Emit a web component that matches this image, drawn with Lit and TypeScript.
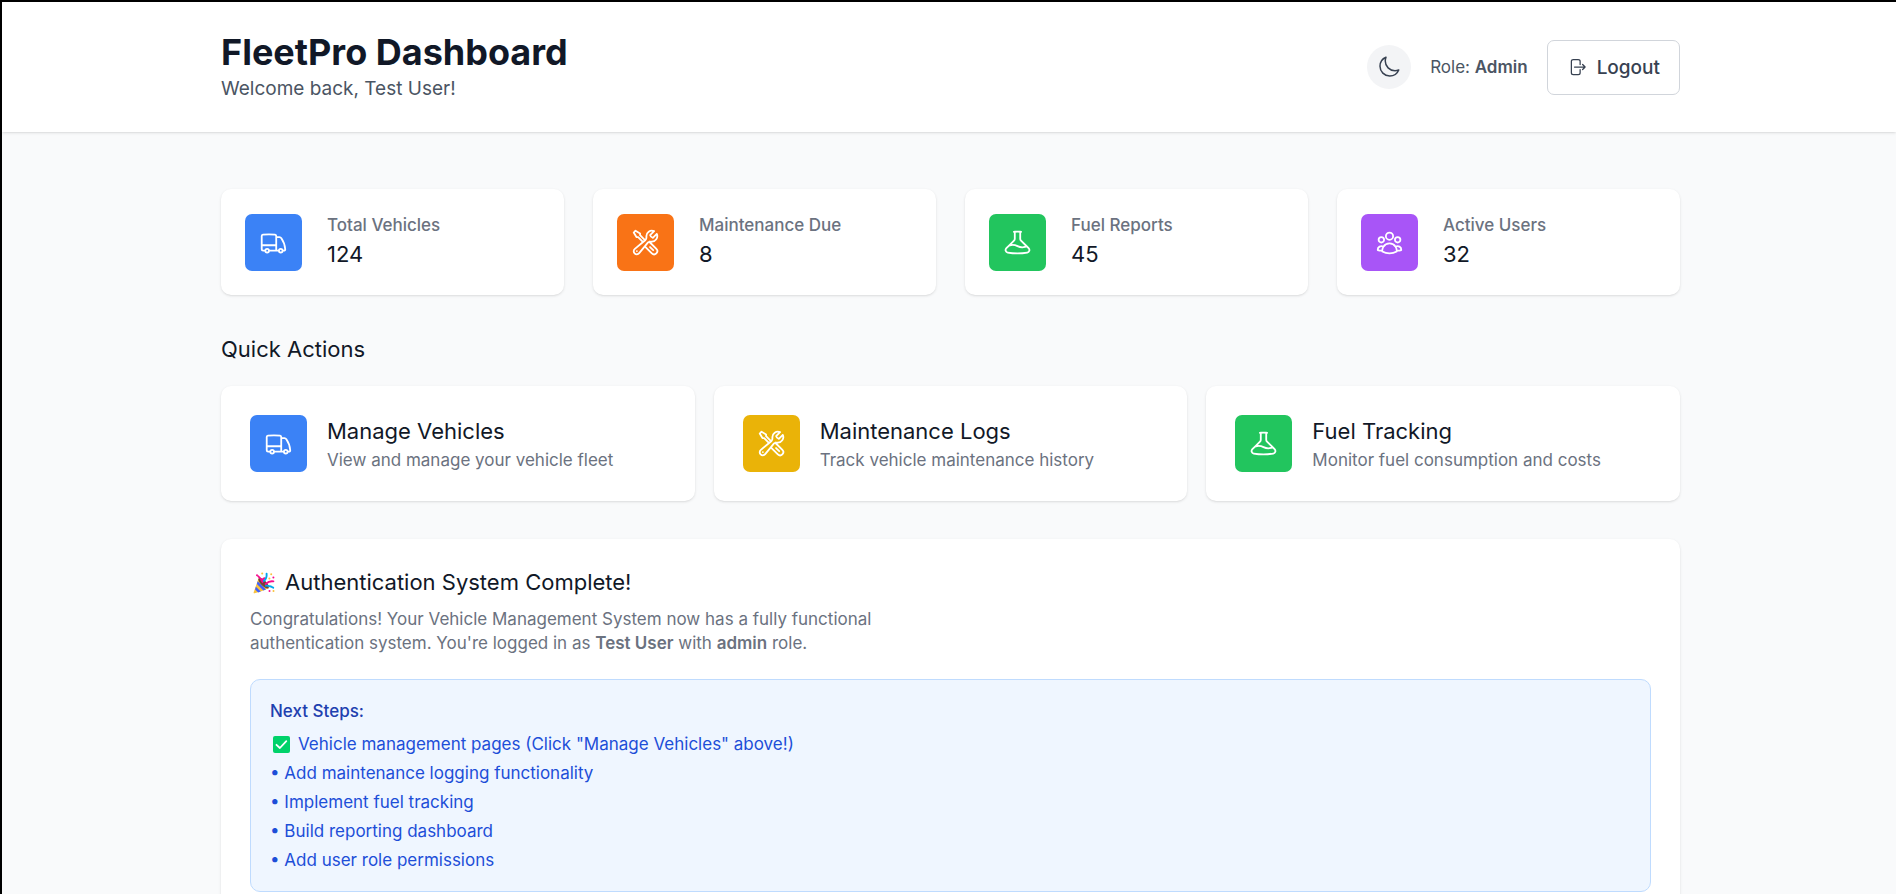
import { LitElement, html, css, svg } from "lit";
import { customElement, state } from "lit/decorators.js";

const ICONS: Record<string, string> = {
  moon: "M21.752 15.002A9.718 9.718 0 0118 15.75c-5.385 0-9.75-4.365-9.75-9.75 0-1.33.266-2.597.748-3.752A9.753 9.753 0 003 11.25C3 16.635 7.365 21 12.75 21a9.753 9.753 0 009.002-5.998z",
  logout:
    "M15.75 9V5.25A2.25 2.25 0 0013.5 3h-6a2.25 2.25 0 00-2.25 2.25v13.5A2.25 2.25 0 007.5 21h6a2.25 2.25 0 002.25-2.25V15m3 0l3-3m0 0l-3-3m3 3H9",
  truck:
    "M8.25 18.75a1.5 1.5 0 01-3 0m3 0a1.5 1.5 0 00-3 0m3 0h6m-9 0H3.375a1.125 1.125 0 01-1.125-1.125V14.25m17.25 4.5a1.5 1.5 0 01-3 0m3 0a1.5 1.5 0 00-3 0m3 0h1.125c.621 0 1.129-.504 1.09-1.124a17.902 17.902 0 00-3.213-9.193 2.056 2.056 0 00-1.58-.86H14.25M16.5 18.75h-2.25m0-11.177v-.958c0-.568-.422-1.048-.987-1.106a48.554 48.554 0 00-10.026 0 1.106 1.106 0 00-.987 1.106v7.635m12-6.677v6.677m0 4.5v-4.5m0 0h-12",
  tools:
    "M11.42 15.17L17.25 21A2.652 2.652 0 0021 17.25l-5.877-5.877M11.42 15.17l2.496-3.03c.317-.384.74-.626 1.208-.766M11.42 15.17l-4.655 5.653a2.548 2.548 0 11-3.586-3.586l6.837-5.63m5.108-.233c.55-.164 1.163-.188 1.743-.14a4.5 4.5 0 004.486-6.336l-3.276 3.277a3.004 3.004 0 01-2.25-2.25l3.276-3.276a4.5 4.5 0 00-6.336 4.486c.091 1.076-.071 2.264-.904 2.95l-.102.085m-1.745 1.437L5.909 7.5H4.5L2.25 3.75l1.5-1.5L7.5 4.5v1.409l4.26 4.26m-1.745 1.437l1.745-1.437m6.615 8.206L15.75 15.75M4.867 19.125h.008v.008h-.008v-.008z",
  beaker:
    "M9.75 3.104v5.714a2.25 2.25 0 01-.659 1.591L5 14.5M9.75 3.104c-.251.023-.501.05-.75.082m.75-.082a24.301 24.301 0 014.5 0m0 0v5.714c0 .597.237 1.17.659 1.591L19.8 15.3M14.25 3.104c.251.023.501.05.75.082M19.8 15.3l-1.57.393A9.065 9.065 0 0112 15a9.065 9.065 0 00-6.23-.693L5 14.5m14.8.8l1.402 1.402c1.232 1.232.65 3.318-1.067 3.611A48.309 48.309 0 0112 21c-2.773 0-5.491-.235-8.135-.687-1.718-.293-2.3-2.379-1.067-3.61L5 14.5",
  users:
    "M18 18.72a9.094 9.094 0 003.741-.479 3 3 0 00-4.682-2.72m.94 3.198l.001.031c0 .225-.012.447-.037.666A11.944 11.944 0 0112 21c-2.17 0-4.207-.576-5.963-1.584A6.062 6.062 0 016 18.719m12 0a5.971 5.971 0 00-.941-3.197m0 0A5.995 5.995 0 0012 12.75a5.995 5.995 0 00-5.058 2.772m0 0a3 3 0 00-4.681 2.72 8.986 8.986 0 003.74.477m.94-3.197a5.971 5.971 0 00-.94 3.197M15 6.75a3 3 0 11-6 0 3 3 0 016 0zm6 3a2.25 2.25 0 11-4.5 0 2.25 2.25 0 014.5 0zm-13.5 0a2.25 2.25 0 11-4.5 0 2.25 2.25 0 014.5 0z",
};

const icon = (name: string, size: string) => html`
  <svg class="icon ${size}" viewBox="0 0 24 24" aria-hidden="true">
    ${svg`<path d=${ICONS[name]} />`}
  </svg>
`;

// Party popper: striped cone at the lower left, streamers to the upper right.
const popper = html`
  <svg class="popper" viewBox="0 0 22 22" role="img" aria-label="Party popper">
    <path d="M5.5 6.5L15.5 16.2Q10 19 1.6 21.3Q.4 21.4.7 20.2Z" fill="#f9c23c" />
    <path d="M4.7 9.2l8.3 8.2-2.6 1.1-6.5-6.4zM2.9 14.8l4.9 4.8-2.6.8-3.1-3z" fill="#3f5fff" />
    <ellipse cx="10.6" cy="11.2" rx="2.7" ry="7" transform="rotate(-45 10.6 11.2)" fill="#6d4534" />
    <path d="M9.6 10.2C8.6 8 7.2 5.6 5.2 4.2M9.6 9.8c-.2-2 .4-3.4 2-3.6" fill="none" stroke="#f70a8d" stroke-width="1.8" stroke-linecap="round" />
    <path d="M10.8 9c1.8-1.4 3.2-3.6 2.8-7.4" fill="none" stroke="#00a6ed" stroke-width="1.9" stroke-linecap="round" />
    <path d="M12.6 12c2-1.8 4.2-3.2 7.8-2.6" fill="none" stroke="#f70a8d" stroke-width="1.9" stroke-linecap="round" />
    <path d="M13 13.8c1.4-.8 2.4.6 3.6.5s1.8.4 3.6 1.4" fill="none" stroke="#00a6ed" stroke-width="1.9" stroke-linecap="round" />
    <circle cx="9.2" cy="1.6" r="1" fill="#f9c23c" />
    <circle cx="18.2" cy="2.3" r="1" fill="#f9c23c" />
    <circle cx="20.4" cy="5.4" r="1" fill="#f70a8d" />
    <circle cx="4" cy="3.2" r="1" fill="#f70a8d" />
    <circle cx="16.4" cy="6.4" r="1" fill="#f9c23c" />
    <circle cx="16.5" cy="19" r="1" fill="#f70a8d" />
    <circle cx="20.5" cy="19" r="1" fill="#f9c23c" />
  </svg>
`;

const check = html`
  <svg class="check" viewBox="0 0 17 17" role="img" aria-label="Done">
    <rect width="17" height="17" rx="2" fill="#00d26a" />
    <path d="M3.5 8.8L6.9 12L13.3 5.2" fill="none" stroke="#fff" stroke-width="1.8" stroke-linecap="round" stroke-linejoin="round" />
  </svg>
`;

interface Tile {
  icon: string;
  tone: string;
  title: string;
  text: string;
}

const STATS: Tile[] = [
  { icon: "truck", tone: "blue", title: "Total Vehicles", text: "124" },
  { icon: "tools", tone: "orange", title: "Maintenance Due", text: "8" },
  { icon: "beaker", tone: "green", title: "Fuel Reports", text: "45" },
  { icon: "users", tone: "purple", title: "Active Users", text: "32" },
];

const ACTIONS: (Tile & { href: string })[] = [
  { icon: "truck", tone: "blue", title: "Manage Vehicles", text: "View and manage your vehicle fleet", href: "#vehicles" },
  { icon: "tools", tone: "yellow", title: "Maintenance Logs", text: "Track vehicle maintenance history", href: "#maintenance" },
  { icon: "beaker", tone: "green", title: "Fuel Tracking", text: "Monitor fuel consumption and costs", href: "#fuel" },
];

const TODO = [
  "Add maintenance logging functionality",
  "Implement fuel tracking",
  "Build reporting dashboard",
  "Add user role permissions",
];

@customElement("app-root")
export class AppRoot extends LitElement {
  @state() private user = { name: "Test User", role: "admin" };

  static styles = css`
    :host {
      display: block;
      box-sizing: border-box;
      min-height: 100vh;
      border-top: 2px solid #000;
      border-left: 2px solid #000;
      background: #f9fafb;
      color: #111827;
      font-family: Inter, "Liberation Sans", sans-serif;
      font-size: 17px;
      line-height: 24px;
    }
    * {
      box-sizing: border-box;
    }
    h1, h2, h3, h4, p, ul, dl, dd {
      margin: 0;
      padding: 0;
    }
    .wrap {
      max-width: 1538px;
      margin: 0 auto;
      padding: 0 38px 0 41px;
    }
    .icon {
      display: block;
      flex: none;
      fill: none;
      stroke: currentColor;
      stroke-width: 1.5;
      stroke-linecap: round;
      stroke-linejoin: round;
    }
    .small { width: 20px; height: 20px; }
    .medium { width: 24px; height: 24px; }
    .large { width: 29px; height: 29px; }

    .header {
      padding: 29px 0;
      background: #fff;
      box-shadow: 0 1px 3px rgba(0, 0, 0, 0.1), 0 1px 2px -1px rgba(0, 0, 0, 0.1);
    }
    .bar {
      display: flex;
      align-items: center;
      justify-content: space-between;
    }
    h1 {
      font-size: 36px;
      line-height: 43px;
      font-weight: 700;
    }
    .welcome {
      font-size: 19px;
      line-height: 29px;
      color: #4b5563;
    }
    .tools {
      display: flex;
      align-items: center;
      gap: 19px;
      color: #4b5563;
    }
    button {
      font: inherit;
      cursor: pointer;
      color: #374151;
    }
    .theme {
      padding: 10px;
      border: 0;
      border-radius: 50%;
      background: #f3f4f6;
    }
    .logout {
      display: flex;
      align-items: center;
      gap: 10px;
      padding: 12px 19px;
      border: 1px solid #d1d5db;
      border-radius: 7px;
      background: #fff;
      font-size: 19px;
      line-height: 29px;
      font-weight: 500;
    }
    strong { font-weight: 600; }

    .main { padding: 57px 0; }
    .card {
      border-radius: 10px;
      background: #fff;
      box-shadow: 0 1px 3px rgba(0, 0, 0, 0.1), 0 1px 2px -1px rgba(0, 0, 0, 0.1);
    }
    .stats {
      display: grid;
      grid-template-columns: repeat(4, 1fr);
      gap: 29px;
    }
    .stat {
      display: flex;
      align-items: center;
      gap: 25px;
      padding: 24px;
    }
    .badge {
      flex: none;
      padding: 14px;
      border-radius: 7px;
      color: #fff;
    }
    .blue { background: #3b82f6; }
    .orange { background: #f97316; }
    .green { background: #22c55e; }
    .purple { background: #a855f7; }
    .yellow { background: #eab308; }
    .label { font-weight: 500; color: #6b7280; }
    .value {
      font-size: 22px;
      line-height: 34px;
      font-weight: 400;
    }
    h2, h3 {
      font-size: 22px;
      line-height: 33px;
      font-weight: 400;
    }
    .quick { padding: 38px 0; }
    .actions {
      display: grid;
      grid-template-columns: repeat(3, 1fr);
      gap: 19px;
      margin-top: 20px;
    }
    .action {
      display: flex;
      align-items: center;
      gap: 20px;
      padding: 29px;
      color: inherit;
      text-decoration: none;
    }
    .muted { color: #6b7280; }
    .notice { padding: 29px; }
    .notice h3 {
      display: flex;
      align-items: center;
      gap: 10px;
      padding-left: 3px;
      line-height: 29px;
    }
    .popper { width: 22px; height: 22px; }
    .message {
      max-width: 691px;
      margin-top: 10px;
    }
    .steps {
      margin-top: 24px;
      padding: 19px;
      border: 1px solid #bfdbfe;
      border-radius: 10px;
      background: #eff6ff;
      color: #1d4ed8;
    }
    h4 {
      font-size: 17px;
      font-weight: 500;
      color: #1e40af;
    }
    ul {
      display: grid;
      gap: 5px;
      margin-top: 9px;
      list-style: none;
    }
    .done {
      display: flex;
      align-items: center;
      gap: 8px;
      padding-left: 3px;
    }
    .check { width: 17px; height: 17px; }
    @media (max-width: 1100px) {
      .stats { grid-template-columns: repeat(2, 1fr); }
      .actions { grid-template-columns: 1fr; }
    }
  `;

  render() {
    const role = this.user.role;
    return html`
      <header class="header">
        <div class="wrap bar">
          <div>
            <h1>FleetPro Dashboard</h1>
            <p class="welcome">Welcome back, ${this.user.name}!</p>
          </div>
          <div class="tools">
            <button class="theme" type="button" aria-label="Switch to dark mode">${icon("moon", "medium")}</button>
            <span>Role: <strong>${role[0].toUpperCase() + role.slice(1)}</strong></span>
            <button class="logout" type="button">${icon("logout", "small")}<span>Logout</span></button>
          </div>
        </div>
      </header>
      <main class="main">
        <div class="wrap">
          <section class="stats">
            ${STATS.map(
              (s) => html`
                <div class="card stat">
                  <div class="badge ${s.tone}">${icon(s.icon, "large")}</div>
                  <dl>
                    <dt class="label">${s.title}</dt>
                    <dd class="value">${s.text}</dd>
                  </dl>
                </div>
              `
            )}
          </section>
          <section class="quick">
            <h2>Quick Actions</h2>
            <div class="actions">
              ${ACTIONS.map(
                (a) => html`
                  <a class="card action" href=${a.href}>
                    <div class="badge ${a.tone}">${icon(a.icon, "large")}</div>
                    <div>
                      <h3>${a.title}</h3>
                      <p class="muted">${a.text}</p>
                    </div>
                  </a>
                `
              )}
            </div>
          </section>
          <section class="card notice">
            <h3>${popper}<span>Authentication System Complete!</span></h3>
            <p class="muted message">
              Congratulations! Your Vehicle Management System now has a fully functional authentication system.
              You're logged in as <strong>${this.user.name}</strong> with <strong>${role}</strong> role.
            </p>
            <div class="steps">
              <h4>Next Steps:</h4>
              <ul>
                <li class="done">${check}<span>Vehicle management pages (Click "Manage Vehicles" above!)</span></li>
                ${TODO.map((t) => html`<li>• ${t}</li>`)}
              </ul>
            </div>
          </section>
        </div>
      </main>
    `;
  }
}
